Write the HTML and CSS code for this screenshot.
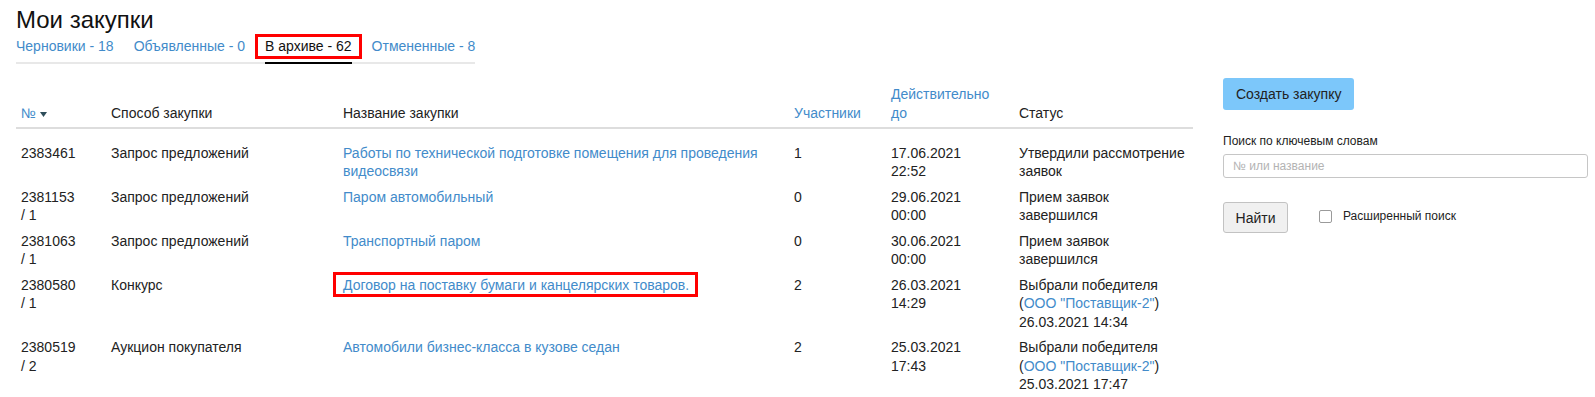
FILE: index.html
```html
<!DOCTYPE html>
<html lang="ru">
<head>
    <meta charset="UTF-8">
    <meta name="viewport" content="width=device-width, initial-scale=1.0">
    <title>Мои закупки</title>
    <link rel="stylesheet" href="styles.css">
</head>
<body>
    <div class="page">
        <div class="main">
            <h1>Мои закупки</h1>
            <nav class="tabs">
                <a href="#">Черновики - 18</a>
                <a href="#">Объявленные - 0</a>
                <a href="#" class="active">В архиве - 62<span class="annot tab-annot"></span></a>
                <a href="#">Отмененные - 8</a>
            </nav>

            <table class="purchases">
                <colgroup>
                    <col style="width: 90px">
                    <col style="width: 232px">
                    <col style="width: 451px">
                    <col style="width: 97px">
                    <col style="width: 128px">
                    <col style="width: 179px">
                </colgroup>
                <thead>
                    <tr>
                        <th><a href="#">№</a><svg class="sort" width="7" height="5" viewBox="0 0 7 5"><path d="M0 0h7L3.5 5z" fill="#2e4d5a"/></svg></th>
                        <th>Способ закупки</th>
                        <th>Название закупки</th>
                        <th><a href="#">Участники</a></th>
                        <th><a href="#">Действительно<br>до</a></th>
                        <th>Статус</th>
                    </tr>
                </thead>
                <tbody>
                    <tr>
                        <td>2383461</td>
                        <td>Запрос предложений</td>
                        <td><a href="#">Работы по технической подготовке помещения для проведения видеосвязи</a></td>
                        <td>1</td>
                        <td>17.06.2021<br>22:52</td>
                        <td>Утвердили рассмотрение заявок</td>
                    </tr>
                    <tr>
                        <td>2381153<br>/ 1</td>
                        <td>Запрос предложений</td>
                        <td><a href="#">Паром автомобильный</a></td>
                        <td>0</td>
                        <td>29.06.2021<br>00:00</td>
                        <td>Прием заявок<br>завершился</td>
                    </tr>
                    <tr>
                        <td>2381063<br>/ 1</td>
                        <td>Запрос предложений</td>
                        <td><a href="#">Транспортный паром</a></td>
                        <td>0</td>
                        <td>30.06.2021<br>00:00</td>
                        <td>Прием заявок<br>завершился</td>
                    </tr>
                    <tr>
                        <td>2380580<br>/ 1</td>
                        <td>Конкурс</td>
                        <td><a href="#" class="marked">Договор на поставку бумаги и канцелярских товаров.<span class="annot link-annot"></span></a></td>
                        <td>2</td>
                        <td>26.03.2021<br>14:29</td>
                        <td>Выбрали победителя<br>(<a href="#">ООО "Поставщик-2"</a>)<br>26.03.2021 14:34</td>
                    </tr>
                    <tr>
                        <td>2380519<br>/ 2</td>
                        <td>Аукцион покупателя</td>
                        <td><a href="#">Автомобили бизнес-класса в кузове седан</a></td>
                        <td>2</td>
                        <td>25.03.2021<br>17:43</td>
                        <td>Выбрали победителя<br>(<a href="#">ООО "Поставщик-2"</a>)<br>25.03.2021 17:47</td>
                    </tr>
                </tbody>
            </table>
        </div>

        <aside class="sidebar">
            <button type="button" class="btn-create">Создать закупку</button>
            <label class="search-label" for="query">Поиск по ключевым словам</label>
            <input type="text" id="query" placeholder="№ или название">
            <div class="search-row">
                <button type="button" class="btn-find">Найти</button>
                <label class="advanced"><input type="checkbox"> Расширенный поиск</label>
            </div>
        </aside>
    </div>
</body>
</html>
```

FILE: styles.css
```css
body {
    margin: 0;
    font-family: "Liberation Sans", Arial, sans-serif;
    color: #222;
    background-color: #fff;
}

a {
    color: #428bca;
    text-decoration: none;
}

.page {
    display: flex;
    padding: 0 7px 0 16px;
}

.main {
    width: 1177px;
    flex-shrink: 0;
}

h1 {
    margin: 6px 0 2px;
    font-size: 24px;
    line-height: 28px;
    font-weight: normal;
    color: #111;
}

/* tabs */
.tabs {
    display: inline-flex;
    border-bottom: 2px solid #e8e8e8;
    font-size: 14px;
    line-height: 20px;
}

.tabs a {
    margin-right: 20px;
    padding-bottom: 6px;
    margin-bottom: -2px;
    border-bottom: 2px solid transparent;
}

.tabs a:last-child {
    margin-right: 0;
}

.tabs a.active {
    position: relative;
    color: #111;
    border-bottom-color: #000;
}

/* red marks from the screenshot */
.annot {
    position: absolute;
    border: 3px solid #f00;
    pointer-events: none;
}

.tab-annot {
    left: -10px;
    right: -10px;
    top: -2px;
    bottom: 3px;
}

.marked {
    position: relative;
}

.link-annot {
    left: -10px;
    right: -9px;
    top: -5px;
    bottom: -4px;
}

/* table */
.purchases {
    width: 100%;
    margin-top: 16px;
    border-collapse: collapse;
    table-layout: fixed;
    font-size: 14px;
    line-height: 18.6px;
}

.purchases th {
    text-align: left;
    font-weight: normal;
    vertical-align: bottom;
    padding: 5px 5px 5px;
    border-bottom: 2px solid #ddd;
}

.purchases td {
    vertical-align: top;
    padding: 3.4px 5px;
}

.purchases tbody tr:first-child td {
    padding-top: 14.6px;
}

.sort {
    margin-left: 4px;
    vertical-align: 1px;
}

/* sidebar */
.sidebar {
    flex: 1;
    margin-left: 30px;
    padding-top: 78px;
}

.btn-create {
    display: block;
    height: 32px;
    padding: 0 13px;
    font-family: inherit;
    font-size: 14px;
    color: #222;
    background-color: #7cc7fa;
    border: none;
    border-radius: 3px;
    cursor: pointer;
}

.search-label {
    display: block;
    margin-top: 23px;
    margin-bottom: 5px;
    font-size: 12px;
    line-height: 16px;
}

#query {
    display: block;
    width: 100%;
    height: 24px;
    box-sizing: border-box;
    padding: 0 9px;
    font-family: inherit;
    font-size: 12px;
    border: 1px solid #c6c6c6;
    border-radius: 3px;
}

#query::placeholder {
    color: #b3b3b3;
}

.search-row {
    display: flex;
    align-items: flex-start;
    margin-top: 24px;
}

.btn-find {
    width: 65px;
    height: 31px;
    font-family: inherit;
    font-size: 14px;
    color: #222;
    background-color: #f0f0f0;
    border: 1px solid #c2c2c2;
    border-radius: 3px;
    cursor: pointer;
}

.advanced {
    display: flex;
    align-items: center;
    margin-left: 31px;
    margin-top: 6px;
    font-size: 12px;
    line-height: 16px;
}

.advanced input {
    appearance: none;
    width: 13px;
    height: 13px;
    margin: 0 11px 0 0;
    border: 1px solid #9a9a9a;
    border-radius: 2px;
    background-color: #fff;
}
```
